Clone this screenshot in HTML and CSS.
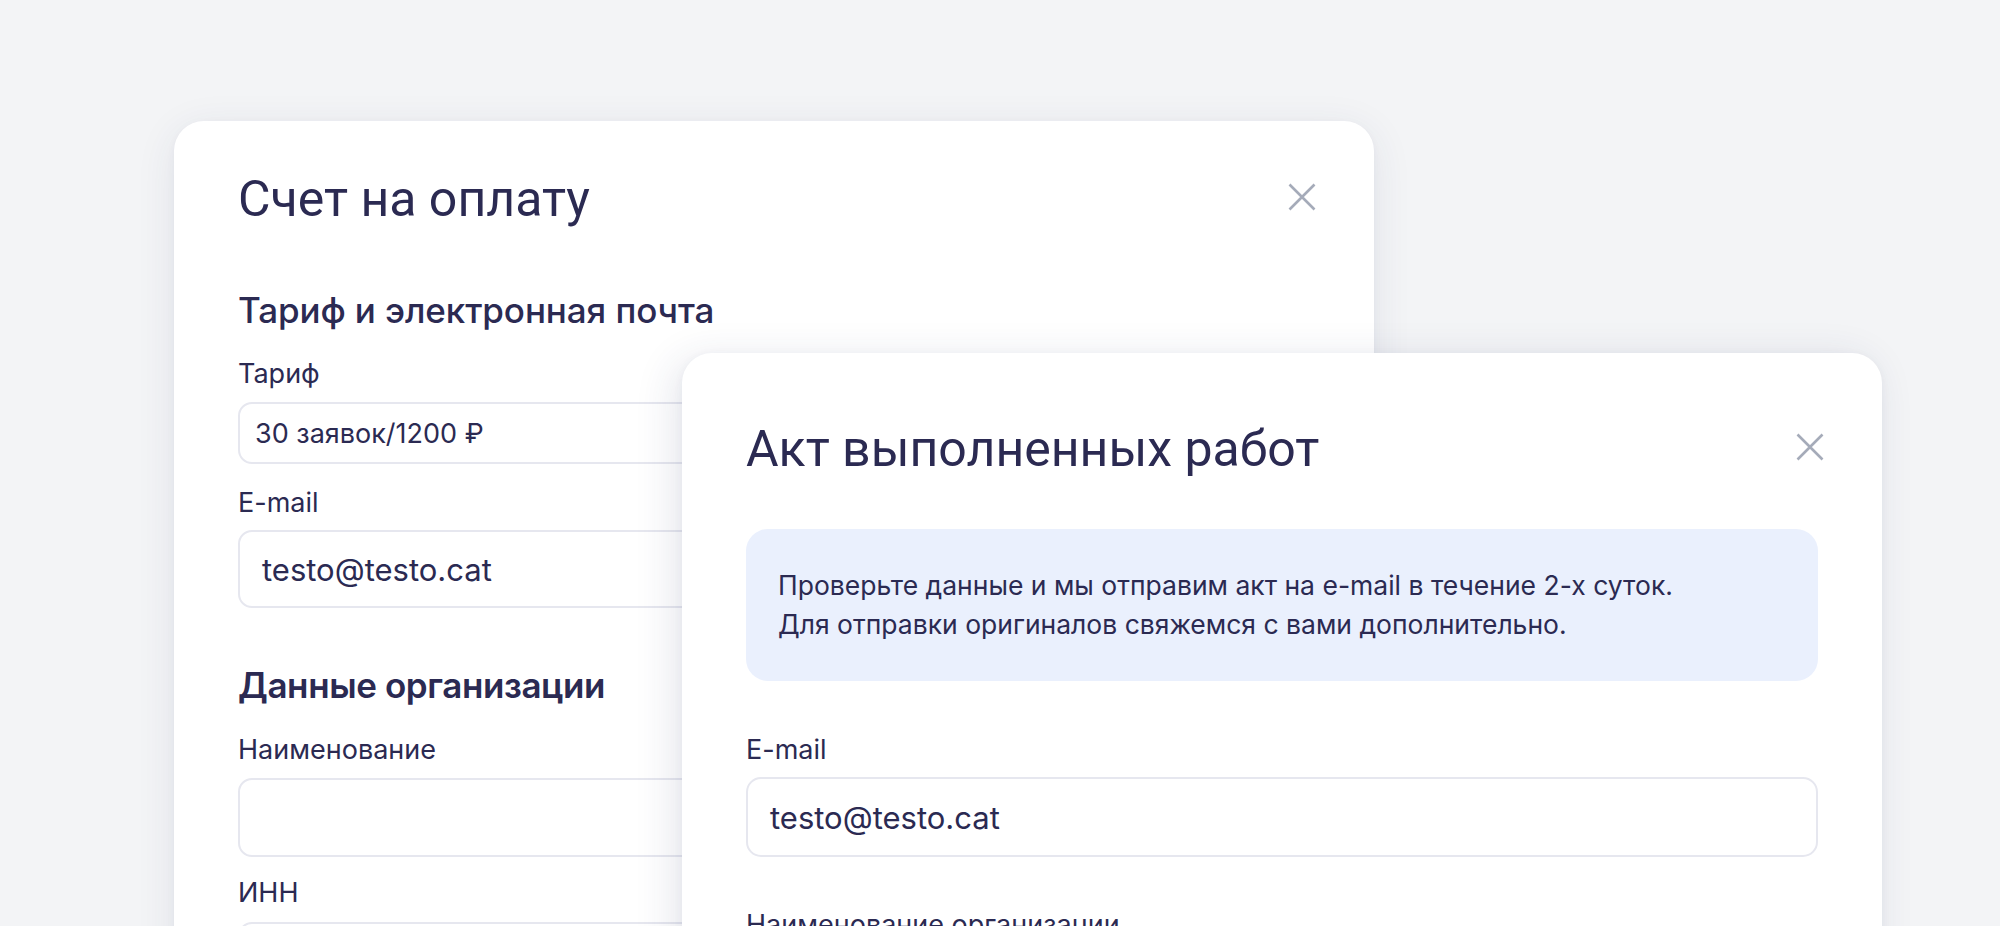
FILE: index.html
```html
<!DOCTYPE html>
<html lang="ru">
<head>
<meta charset="utf-8">
<title>Счет на оплату</title>
<link rel="stylesheet" href="styles.css">
</head>
<body>
<div class="stage">
  <section class="card card-invoice">
    <header class="card-head">
      <h1 class="card-title">Счет на оплату</h1>
      <svg class="close" viewBox="0 0 28 28" aria-hidden="true"><path d="M1.5 1.5 L26.5 26.5 M26.5 1.5 L1.5 26.5"/></svg>
    </header>
    <h2 class="section-title">Тариф и электронная почта</h2>
    <div class="label label-first">Тариф</div>
    <div class="input input-sm">30 заявок/1200 ₽</div>
    <div class="label label-next">E-mail</div>
    <div class="input input-lg">testo@testo.cat</div>
    <h2 class="section-title section-bold">Данные организации</h2>
    <div class="label label-first">Наименование</div>
    <div class="input input-empty"></div>
    <div class="label label-inn">ИНН</div>
    <div class="input input-empty input-last"></div>
  </section>

  <section class="card card-act">
    <header class="card-head">
      <h1 class="card-title">Акт выполненных работ</h1>
      <svg class="close" viewBox="0 0 28 28" aria-hidden="true"><path d="M1.5 1.5 L26.5 26.5 M26.5 1.5 L1.5 26.5"/></svg>
    </header>
    <div class="notice">
      <p class="notice-line">Проверьте данные и мы отправим акт на e-mail в течение 2-х суток.</p>
      <p class="notice-line">Для отправки оригиналов свяжемся с вами дополнительно.</p>
    </div>
    <div class="label act-label">E-mail</div>
    <div class="input input-lg act-input">testo@testo.cat</div>
    <div class="label act-label-2">Наименование организации</div>
    <div class="input input-lg act-input"></div>
  </section>
</div>
</body>
</html>
```

FILE: styles.css
```css
* { box-sizing: border-box; }

html, body {
  margin: 0;
  padding: 0;
}

body {
  background: #f3f4f6;
  color: #2b2a52;
  font-family: Inter, "Noto Sans", sans-serif;
  overflow: hidden;
}

.stage {
  position: relative;
  width: 2000px;
  height: 926px;
  overflow: hidden;
}

.card {
  position: absolute;
  width: 1200px;
  background: #ffffff;
  border-radius: 30px;
  padding: 0 64px;
  box-shadow: 0 8px 40px rgba(40, 50, 100, 0.09), 0 2px 8px rgba(40, 50, 100, 0.04);
}

.card-invoice {
  left: 174px;
  top: 121px;
  height: 960px;
  padding-top: 50px;
}

.card-act {
  left: 682px;
  top: 353px;
  height: 760px;
  padding-top: 68px;
  box-shadow: -8px 6px 40px rgba(40, 50, 100, 0.12), 0 2px 10px rgba(40, 50, 100, 0.05);
}

.card-head {
  display: flex;
  justify-content: space-between;
  align-items: flex-start;
}

.card-title {
  margin: 0;
  font-family: Roboto, "Liberation Sans", sans-serif;
  font-weight: 400;
  font-size: 50px;
  line-height: 56px;
  color: #2b2a52;
  white-space: nowrap;
}

.close {
  width: 28px;
  height: 28px;
  margin-top: 12px;
  margin-right: -6px;
  fill: none;
  stroke: #a5abb9;
  stroke-width: 2.6;
  flex: none;
}

.section-title {
  margin: 63px 0 0 0;
  font-family: Inter, "Noto Sans", sans-serif;
  font-weight: 500;
  font-size: 35px;
  line-height: 40px;
  letter-spacing: -0.1px;
  color: #2b2a52;
}

.section-bold {
  margin-top: 56px;
  font-weight: 600;
  font-size: 35px;
  line-height: 42px;
  letter-spacing: -0.4px;
}

.label {
  font-size: 27px;
  line-height: 30px;
  color: #2b2a52;
  white-space: nowrap;
}

.label-first { margin-top: 29px; }
.label-next { margin-top: 24px; }
.label-inn { margin-top: 21px; }

.input {
  display: flex;
  align-items: center;
  border: 2px solid #e6e7ef;
  border-radius: 14px;
  background: #fff;
  color: #2b2a52;
  white-space: nowrap;
}

.input-sm {
  margin-top: 13px;
  height: 62px;
  padding-left: 15px;
  font-size: 27px;
}

.input-lg {
  margin-top: 12px;
  height: 78px;
  padding-left: 22px;
  font-size: 31px;
}

.input-empty {
  margin-top: 13px;
  height: 79px;
}

.input-last { margin-top: 14px; }

.notice {
  margin-top: 52px;
  background: #eaf0fd;
  border-radius: 22px;
  padding: 37px 32px;
}

.notice-line {
  margin: 0;
  font-size: 26.5px;
  line-height: 39px;
  white-space: nowrap;
  color: #2b2a52;
}

.act-label {
  margin-top: 54px;
}

.act-label-2 {
  margin-top: 53px;
}

.act-input {
  height: 80px;
  border-radius: 15px;
}
```
